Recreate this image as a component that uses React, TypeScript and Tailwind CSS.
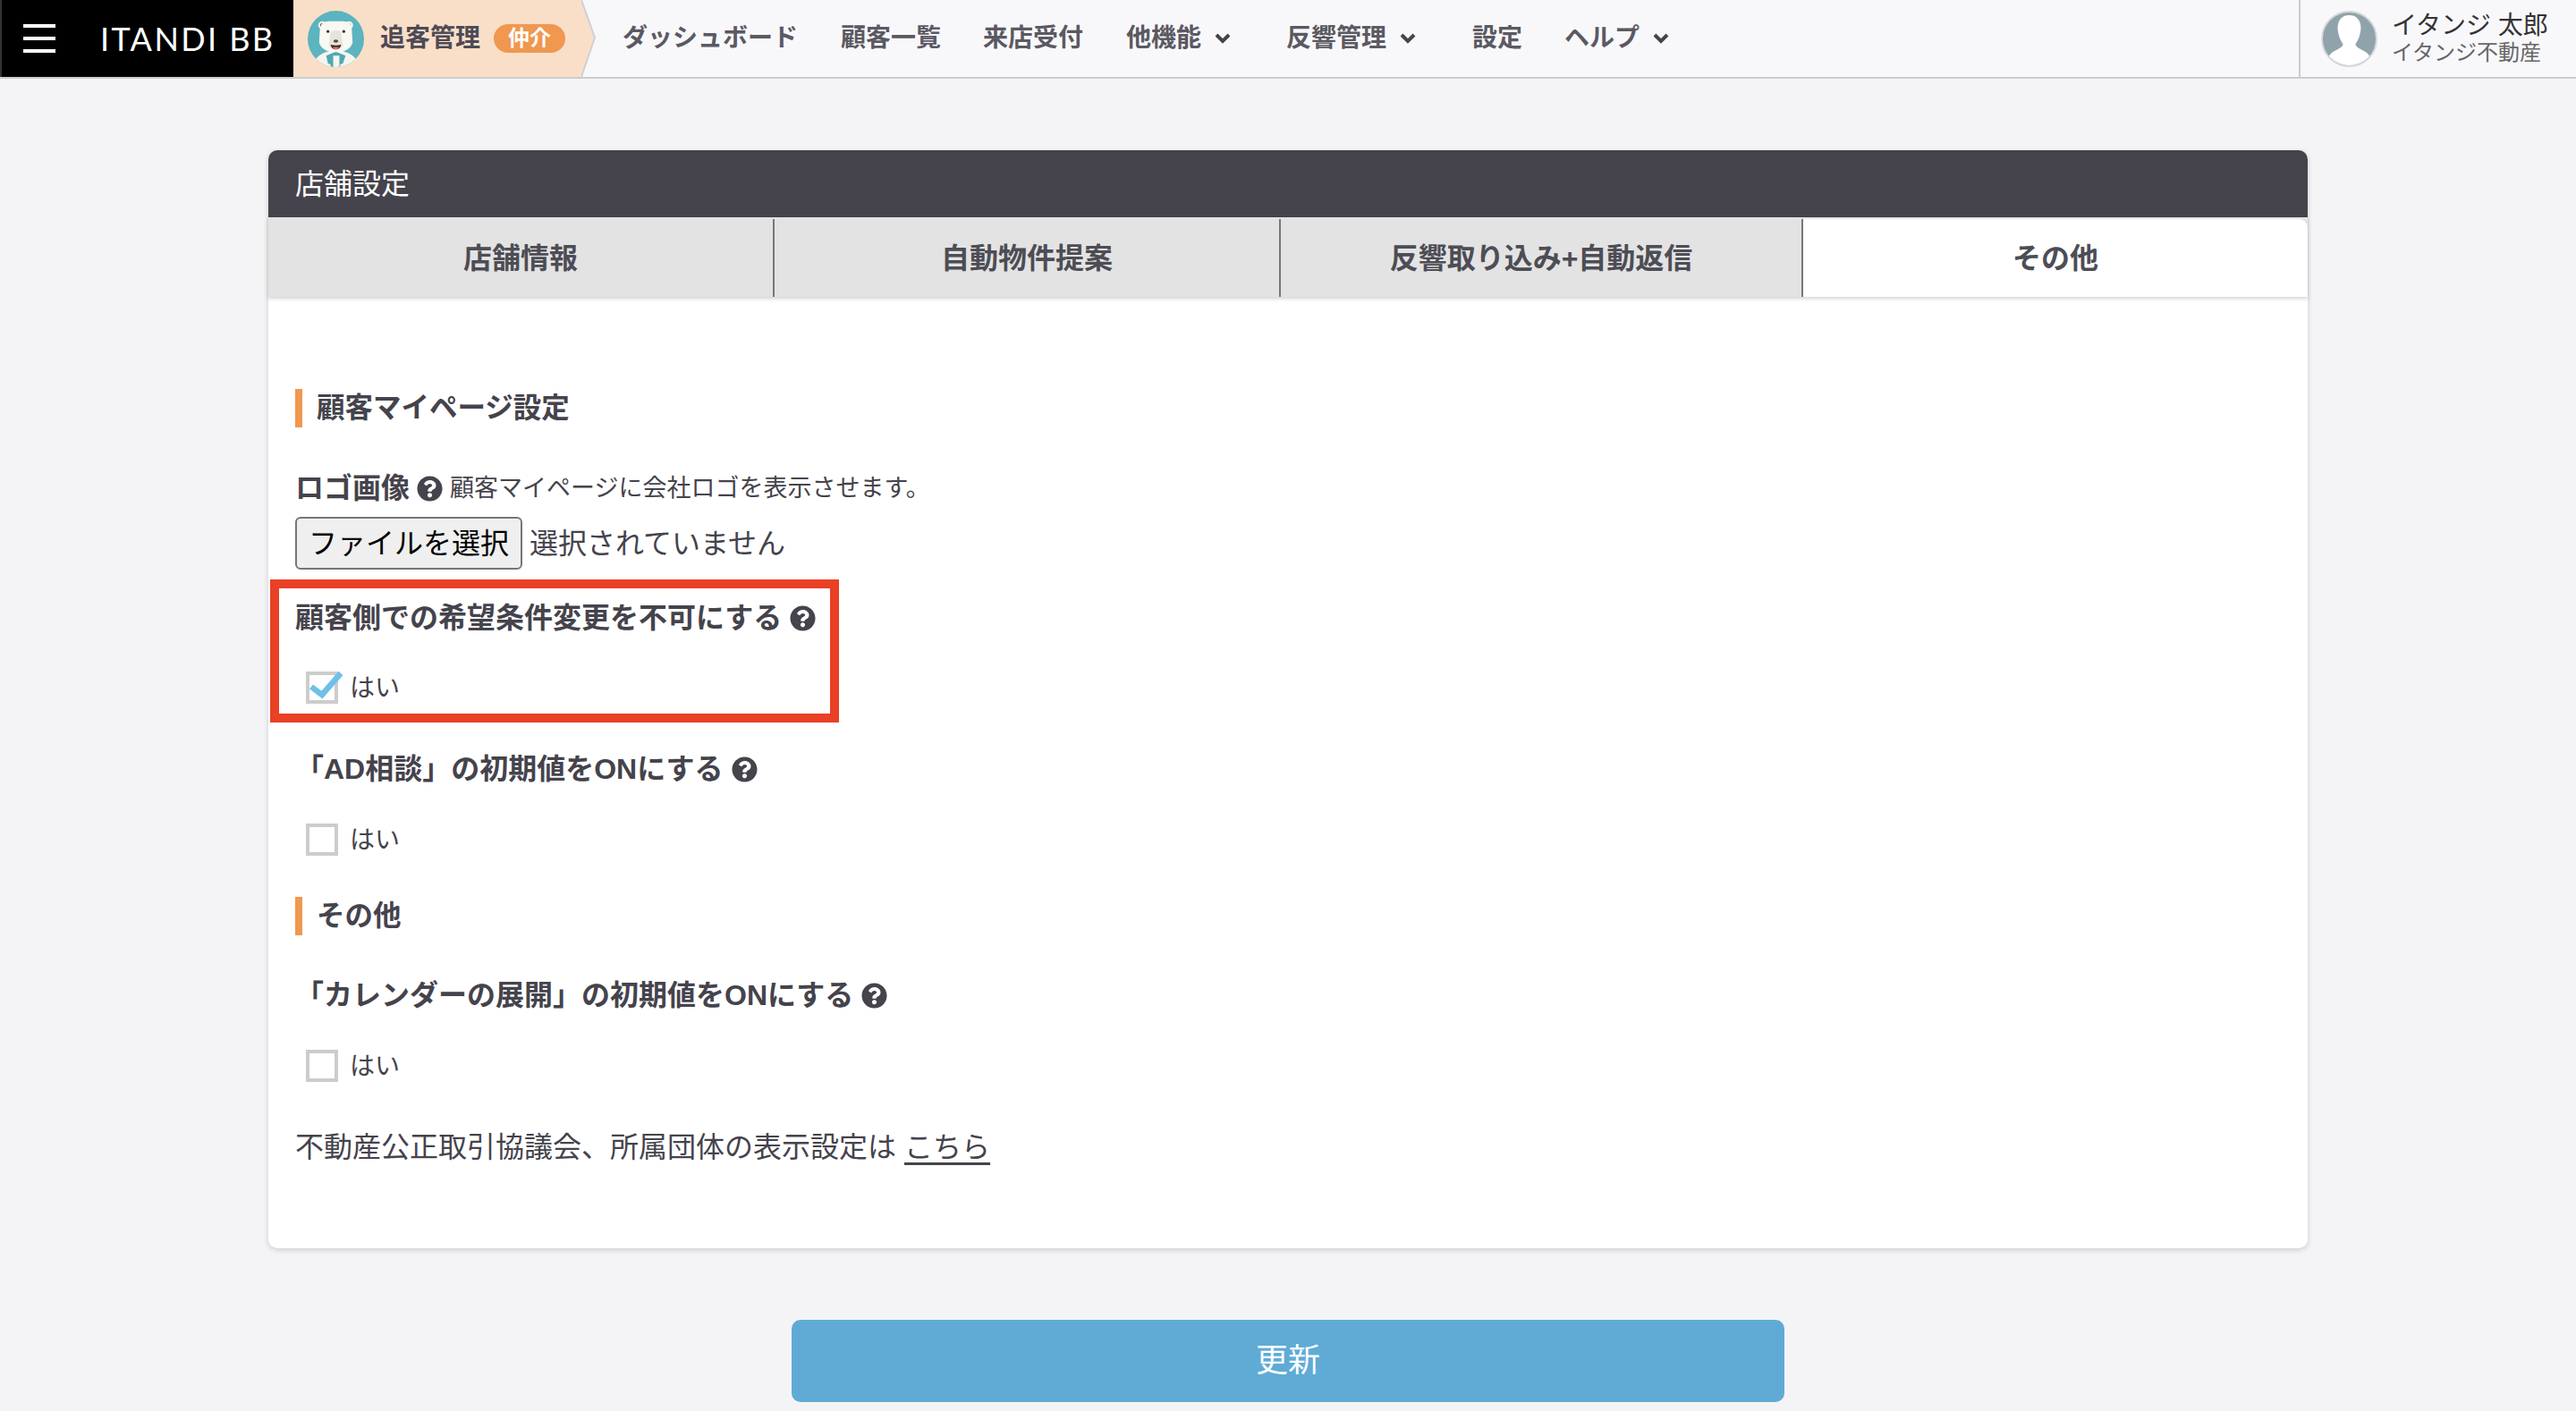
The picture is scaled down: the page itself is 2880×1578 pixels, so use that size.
import { FaQuestionCircle } from 'react-icons/fa';

const navItems = [
  { label: '顧客一覧', className: 'ml-[48px]' },
  { label: '来店受付', className: 'ml-[47px]' },
  { label: '他機能', className: 'ml-[48px]', menu: true },
  { label: '反響管理', className: 'ml-[62px]', menu: true },
  { label: '設定', className: 'ml-[63px]' },
  { label: 'ヘルプ', className: 'ml-[47px]', menu: true },
];

function Chevron() {
  return (
    <svg viewBox="0 0 18 12" className="ml-[15px] h-[12px] w-[18px] shrink-0">
      <polyline points="2,2 9,9 16,2" fill="none" stroke="#45434c" strokeWidth="4" />
    </svg>
  );
}

function Bear() {
  return (
    <svg viewBox="0 0 64 64" className="h-[63px] w-[63px] shrink-0">
      <defs>
        <clipPath id="bearClip">
          <circle cx="32" cy="32" r="32" />
        </clipPath>
      </defs>
      <g clipPath="url(#bearClip)">
        <rect width="64" height="64" fill="#5bb4bf" />
        <ellipse cx="32" cy="64" rx="26" ry="19" fill="#f6f5ee" />
        <circle cx="16.5" cy="16.5" r="4.5" fill="#f6f5ee" />
        <circle cx="16.5" cy="16.5" r="2.2" fill="#4a4038" />
        <circle cx="47" cy="16.5" r="4.5" fill="#f6f5ee" />
        <circle cx="47" cy="16.5" r="2.2" fill="#c9bfae" />
        <path d="M14 20 Q15 12 24 12 L40 12 Q49 12 50 20 L51 36 Q48 47 32 47 Q16 47 13 36 Z" fill="#f9f8f2" />
        <path d="M26 24 Q32 20 38 24 L40 40 Q32 48 24 40 Z" fill="#e7e5da" />
        <circle cx="23" cy="23.5" r="1.6" fill="#3a3230" />
        <circle cx="41" cy="23.5" r="1.6" fill="#3a3230" />
        <ellipse cx="32" cy="34.5" rx="2.8" ry="1.8" fill="#5a4c44" />
        <path d="M26 38.5 Q32 40 38 38.5 Q37 44 32 44 Q27 44 26 38.5 Z" fill="#3a2c2a" />
        <path d="M28 42 Q32 40.5 36 42 Q34 44 32 44 Q30 44 28 42 Z" fill="#e2745f" />
        <path d="M21 51 L31 47 L33 47 L43 51 L40 60 L37 61 L37 64 L26 64 L26 61 L23 60 Z" fill="#4ea9b5" />
        <rect x="29" y="51" width="7" height="13" fill="#f6f5ee" />
      </g>
    </svg>
  );
}

function UserAvatar() {
  return (
    <svg viewBox="0 0 64 64" className="h-[63px] w-[63px] shrink-0">
      <defs>
        <clipPath id="userClip">
          <circle cx="32" cy="32" r="30" />
        </clipPath>
      </defs>
      <circle cx="32" cy="32" r="31" fill="#91a3aa" stroke="#d5d8da" strokeWidth="2" />
      <g clipPath="url(#userClip)">
        <path d="M32 5 C42 5 46 13 45 22 C44 30 41 35 39 38 C40 42 46 44 51 47 C55 50 57 54 58 60 L58 64 L6 64 L6 60 C7 54 9 50 13 47 C18 44 24 42 25 38 C23 35 20 30 19 22 C18 13 22 5 32 5 Z" fill="#fff" />
      </g>
    </svg>
  );
}

function Help({ className = '' }: { className?: string }) {
  return <FaQuestionCircle className={`h-[29px] w-[29px] shrink-0 text-[#45434c] ${className}`} />;
}

function SectionTitle({ children, className = '' }: { children: string; className?: string }) {
  return (
    <h2 className={`flex h-[43px] items-center border-l-[8px] border-[#f09750] pl-[16px] pt-[1px] text-[31.5px] font-bold ${className}`}>
      {children}
    </h2>
  );
}

function FieldLabel({ children, className = '' }: { children: string; className?: string }) {
  return (
    <div className={`flex h-[40px] items-center gap-[9px] text-[32px] font-bold ${className}`}>
      <span>{children}</span>
      <Help />
    </div>
  );
}

function YesCheck({ checked = false, className = '' }: { checked?: boolean; className?: string }) {
  return (
    <label className={`ml-[12px] flex h-[36px] items-center ${className}`}>
      <span className="relative h-[36px] w-[36px] shrink-0 border-[4px] border-[#cccccc] bg-white">
        {checked && (
          <svg viewBox="0 0 40 30" className="absolute left-[-1px] top-[-4px] h-[30px] w-[40px] overflow-visible">
            <polyline points="3,17 15,26 36,2" fill="none" stroke="#6fc0e8" strokeWidth="6.5" />
          </svg>
        )}
      </span>
      <span className="ml-[13px] pt-[2px] text-[28px]">はい</span>
    </label>
  );
}

export default function App() {
  return (
    <div className="min-h-[1578px] bg-[#f4f4f6] font-['Liberation_Sans','Noto_Sans_CJK_JP',sans-serif] text-[#45434c]">
      {/* Header */}
      <header className="flex h-[88px] border-b-[2px] border-[#cccccc] bg-[#f8f8fb]">
        <div className="flex w-[328px] shrink-0 items-center border-l-[2px] border-[#333333] bg-black pl-[24px] text-white">
          <div className="flex w-[36px] flex-col gap-[10px]">
            <span className="h-[4px] bg-white" />
            <span className="h-[4px] bg-white" />
            <span className="h-[4px] bg-white" />
          </div>
          <span className="ml-[50px] whitespace-nowrap font-['Lato',sans-serif] text-[36px] font-normal leading-none tracking-[2.4px]">
            ITANDI BB
          </span>
        </div>
        <div className="flex w-[322px] shrink-0 items-center bg-[#f9dfc7] pl-[16px]">
          <Bear />
          <span className="ml-[18px] text-[28px] font-bold leading-none text-[#4d4a55]">追客管理</span>
          <span className="ml-[15px] flex h-[32px] w-[80px] items-center justify-center rounded-full bg-[#f09750] text-[24px] font-bold leading-none text-white">
            仲介
          </span>
        </div>
        <svg viewBox="0 0 17 86" className="h-[86px] w-[17px] shrink-0">
          <polygon points="0,0 15,42 0,86" fill="#f9dfc7" />
          <polyline points="0,0 15,42 0,86" fill="none" stroke="#cfd0d6" strokeWidth="2" />
        </svg>
        <nav className="ml-[29px] flex items-center text-[28px] font-bold text-[#5b5962]">
          <span className="whitespace-nowrap">ダッシュボード</span>
          {navItems.map((item) => (
            <span key={item.label} className={`flex items-center whitespace-nowrap ${item.className}`}>
              {item.label}
              {item.menu && <Chevron />}
            </span>
          ))}
        </nav>
        <div className="ml-auto flex w-[310px] shrink-0 items-center border-l-[2px] border-[#cccccc] pl-[23px]">
          <UserAvatar />
          <div className="ml-[16px] flex flex-col">
            <span className="whitespace-nowrap text-[28px] leading-[32px] text-[#333333]">イタンジ 太郎</span>
            <span className="whitespace-nowrap text-[24px] leading-[28px] text-[#666666]">イタンジ不動産</span>
          </div>
        </div>
      </header>

      <main className="mx-auto w-[2280px] pb-[10px] pt-[80px]">
        {/* Settings card */}
        <section className="relative rounded-[10px] bg-white shadow-[0_2px_6px_rgba(0,0,0,0.16)]">
          <div className="flex h-[75px] items-center rounded-t-[10px] bg-[#45434c] pl-[30px] text-[32px] text-white">
            店舗設定
          </div>
          <div className="flex h-[89px] bg-[#e3e3e6] pt-[2px] text-center text-[32px] font-bold text-[#4d4d55] shadow-[0_2px_4px_rgba(0,0,0,0.18)]">
            <div className="flex w-[564px] items-center justify-center bg-[#e3e3e3]">店舗情報</div>
            <div className="flex w-[566px] items-center justify-center border-l-[2px] border-[#77767c] bg-[#e3e3e3]">自動物件提案</div>
            <div className="flex w-[584px] items-center justify-center border-l-[2px] border-[#77767c] bg-[#e3e3e3]">反響取り込み+自動返信</div>
            <div className="flex w-[566px] items-center justify-center rounded-tr-[10px] border-l-[2px] border-[#77767c] bg-white">その他</div>
          </div>

          <div className="px-[30px] pb-[93px] pt-[103px]">
            <SectionTitle>顧客マイページ設定</SectionTitle>

            <div className="mt-[47px] flex h-[40px] items-center pt-[2px]">
              <span className="text-[32px] font-bold">ロゴ画像</span>
              <Help className="ml-[8px]" />
              <span className="ml-[8px] text-[27px]">顧客マイページに会社ロゴを表示させます。</span>
            </div>
            <div className="mt-[13px] flex items-center">
              <button className="h-[59px] w-[254px] rounded-[6px] border-[2px] border-[#767676] bg-[#efefef] text-[32px] text-black">
                ファイルを選択
              </button>
              <span className="ml-[8px] text-[32px]">選択されていません</span>
            </div>

            <FieldLabel className="mt-[34px]">顧客側での希望条件変更を不可にする</FieldLabel>
            <YesCheck checked className="mt-[40px]" />

            <FieldLabel className="mt-[53px]">「AD相談」の初期値をONにする</FieldLabel>
            <YesCheck className="mt-[41px]" />

            <SectionTitle className="mt-[46px]">その他</SectionTitle>

            <FieldLabel className="mt-[47px]">「カレンダーの展開」の初期値をONにする</FieldLabel>
            <YesCheck className="mt-[41px]" />

            <p className="mt-[53px] flex h-[40px] items-center text-[32px]">
              不動産公正取引協議会、所属団体の表示設定は
              <a className="ml-[9px] underline decoration-[3px] underline-offset-[6px]">こちら</a>
            </p>
          </div>

          {/* Red annotation box */}
          <div className="absolute left-[2px] top-[480px] h-[160px] w-[636px] border-[10px] border-[#e94026]" />
        </section>

        <button className="mx-auto mt-[80px] block h-[92px] w-[1110px] rounded-[10px] bg-[#5fabd6] text-[36px] text-white">
          更新
        </button>
      </main>
    </div>
  );
}
